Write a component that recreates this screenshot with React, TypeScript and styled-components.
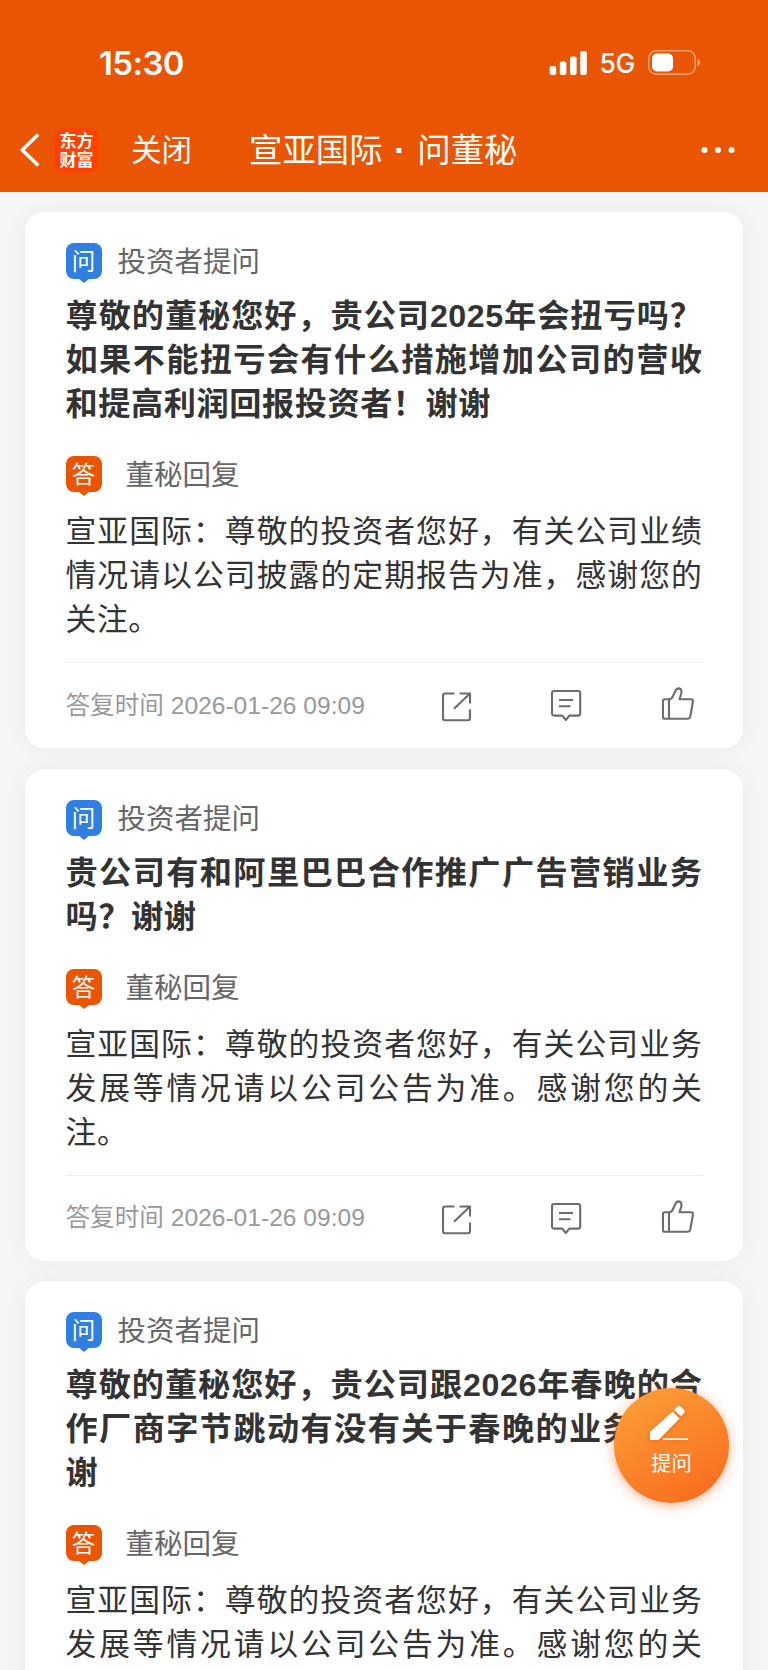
import React from 'react';
import styled, { createGlobalStyle } from 'styled-components';

const GlobalStyle = createGlobalStyle`
  * { box-sizing: border-box; }
  body {
    margin: 0;
    background: #f5f5f5;
    font-family: "Liberation Sans", "Noto Sans CJK SC", sans-serif;
    -webkit-font-smoothing: antialiased;
  }
`;

const Screen = styled.div`
  position: relative;
  width: 768px;
  height: 1670px;
  overflow: hidden;
  background: #f6f6f6;
`;

const Header = styled.header`
  position: relative;
  z-index: 1;
  height: 192px;
  background: #ea5504;
  color: #fff;
`;

const StatusBar = styled.div`
  display: flex;
  align-items: center;
  height: 108px;
  padding: 17px 67px 0 99px;
  font-family: Inter, sans-serif;
`;

const Clock = styled.div`
  flex: 1;
  font-size: 32.8px;
  font-weight: 600;
  letter-spacing: -0.5px;
`;

const Network = styled.span`
  margin: 1px 13px 0 12px;
  font-size: 26.5px;
  font-weight: 500;
  letter-spacing: -0.3px;
`;

const NavBar = styled.nav`
  display: flex;
  align-items: center;
  height: 84px;
  padding: 0 33px 0 20px;
`;

const Logo = styled.div`
  display: flex;
  flex-direction: column;
  justify-content: center;
  width: 45px;
  height: 45px;
  margin: 0 32px 0 14px;
  padding-bottom: 3px;
  border-radius: 10px;
  background: #ff4200;
  font: 700 17px/19px "Noto Sans CJK SC", sans-serif;
  text-align: center;
`;

const Close = styled.span`
  width: 118px;
  font-size: 30.5px;
  line-height: 44px;
`;

const PageTitle = styled.h1`
  flex: 1;
  margin: 0;
  padding-top: 2px;
  font-size: 33.4px;
  font-weight: 400;
  line-height: 44px;
  white-space: nowrap;
`;

const Dot = styled.span`
  margin: 0 2.5px;
  font-weight: 700;
`;

const Feed = styled.main`
  display: flex;
  flex-direction: column;
  gap: 20.5px;
  padding: 20px 25px 0;
`;

const Card = styled.article`
  flex: none;
  padding: 31px 40.5px 0 40.5px;
  border-radius: 20px;
  background: #fff;
  box-shadow: 0 0 24px rgba(0, 0, 0, 0.055);
`;

const TagRow = styled.div<{ $gap: number }>`
  display: flex;
  gap: ${(p) => p.$gap}px;
  height: 41px;
`;

const Badge = styled.span<{ $color: string }>`
  position: relative;
  width: 36px;
  height: 36px;
  border-radius: 8px;
  background: ${(p) => p.$color};
  color: #fff;
  font: 400 23.5px/34px "Noto Sans CJK SC", sans-serif;
  text-align: center;

  &::after {
    content: "";
    position: absolute;
    left: 12px;
    top: 35px;
    border: 6px solid transparent;
    border-top: 5.5px solid ${(p) => p.$color};
    border-bottom: 0;
  }
`;

const TagLabel = styled.span`
  color: #666;
  font-size: 28.5px;
  line-height: 38px;
`;

const Question = styled.h2`
  margin: 10px 0 30px;
  color: #333;
  font-size: 32.2px;
  font-weight: 700;
  line-height: 44px;
  letter-spacing: 0.55px;
  text-align: justify;
`;

const Answer = styled.p`
  margin: 13px 0 20px;
  color: #333;
  font-size: 30.8px;
  line-height: 44px;
  letter-spacing: 0.6px;
  text-align: justify;
`;

const Footer = styled.footer`
  display: grid;
  grid-template-columns: 375.5px 109px 111px 1fr;
  align-items: center;
  height: 86px;
  border-top: 1px solid #eee;
`;

const Time = styled.time`
  padding-bottom: 6px;
  color: #999;
  font-size: 24.6px;
  white-space: nowrap;
`;

const ActionIcon = styled.svg<{ $lift?: number }>`
  display: block;
  margin-bottom: ${(p) => p.$lift ?? 0}px;
  overflow: visible;
  fill: none;
  stroke: #6c6c6c;
  stroke-width: 2.1;
  stroke-linejoin: round;
`;

const AskButton = styled.button`
  position: absolute;
  z-index: 2;
  left: 614px;
  top: 1388px;
  display: flex;
  flex-direction: column;
  align-items: center;
  width: 115px;
  height: 115px;
  padding: 15px 0 0;
  border: 0;
  border-radius: 50%;
  background: linear-gradient(150deg, #fba038 5%, #f96d1e 90%);
  box-shadow: 0 2px 12px rgba(249, 96, 24, 0.5);
  color: #fff;
  font: 400 20.3px/28px "Noto Sans CJK SC", sans-serif;
`;

const PencilIcon = styled.svg`
  display: block;
  margin: 1px 5px 6px 0;
  filter: drop-shadow(0 1px 2px rgba(220, 70, 0, 0.45));
`;

const ShareIcon = () => (
  <ActionIcon width="31" height="33" viewBox="0 0 31 33">
    <path d="M13.5 4.5H4.2Q2 4.5 2 6.7V29Q2 31.2 4.2 31.2H27Q29 31.2 29 29V20.5M18.5 4.5H29V14.5M29 4.5L13 19.8" />
  </ActionIcon>
);

const CommentIcon = () => (
  <ActionIcon width="32" height="33" viewBox="0 0 32 33">
    <path d="M4.2 2H28Q30.2 2 30.2 4.2V24.5Q30.2 26.6 28 26.6H19.3L15.8 31L12.3 26.6H4.2Q2 26.6 2 24.5V4.2Q2 2 4.2 2ZM9 11H23M9 17.2H20.5" />
  </ActionIcon>
);

const LikeIcon = () => (
  <ActionIcon $lift={4} width="33" height="35" viewBox="0 0 33 35">
    <path d="M8 13.2H3.8Q2 13.2 2 15V31Q2 32.8 3.8 32.8H26.5Q28.7 32.8 29.2 30.8L32 15.5Q32 13.2 30 13.2H18.5L20.3 7.5Q21 3 18 2.4Q15.3 2.3 14.3 5.2L11.5 11Q10.5 13.2 8 13.2V32.8" />
  </ActionIcon>
);

interface Entry {
  question: string;
  answer: string;
}

const entries: Entry[] = [
  {
    question:
      '尊敬的董秘您好，贵公司2025年会扭亏吗？如果不能扭亏会有什么措施增加公司的营收和提高利润回报投资者！谢谢',
    answer:
      '宣亚国际：尊敬的投资者您好，有关公司业绩情况请以公司披露的定期报告为准，感谢您的关注。',
  },
  {
    question: '贵公司有和阿里巴巴合作推广广告营销业务吗？谢谢',
    answer:
      '宣亚国际：尊敬的投资者您好，有关公司业务发展等情况请以公司公告为准。感谢您的关注。',
  },
  {
    question: '尊敬的董秘您好，贵公司跟2026年春晚的合作厂商字节跳动有没有关于春晚的业务？谢谢',
    answer:
      '宣亚国际：尊敬的投资者您好，有关公司业务发展等情况请以公司公告为准。感谢您的关注。',
  },
];

const QACard = ({ question, answer }: Entry) => (
  <Card>
    <TagRow $gap={16}>
      <Badge $color="#2f7fe3">问</Badge>
      <TagLabel>投资者提问</TagLabel>
    </TagRow>
    <Question>{question}</Question>
    <TagRow $gap={24}>
      <Badge $color="#ea5504">答</Badge>
      <TagLabel>董秘回复</TagLabel>
    </TagRow>
    <Answer>{answer}</Answer>
    <Footer>
      <Time>答复时间 2026-01-26 09:09</Time>
      <ShareIcon />
      <CommentIcon />
      <LikeIcon />
    </Footer>
  </Card>
);

export default function App() {
  return (
    <Screen>
      <GlobalStyle />
      <Header>
        <StatusBar>
          <Clock>15:30</Clock>
          <svg width="38" height="24" viewBox="0 0 38 24" fill="#fff">
            <rect x="0.6" y="15" width="6.6" height="9" rx="2" />
            <rect x="10.8" y="10.5" width="6.6" height="13.5" rx="2" />
            <rect x="21" y="5.5" width="6.6" height="18.5" rx="2" />
            <rect x="31.2" y="0" width="6.6" height="24" rx="2" />
          </svg>
          <Network>5G</Network>
          <svg width="53" height="25" viewBox="0 0 53 25" fill="#fff">
            <rect x="0.8" y="0.8" width="46.4" height="23.4" rx="7.5" fill="none" stroke="#fff" strokeOpacity="0.45" strokeWidth="1.5" />
            <rect x="4" y="3.5" width="21" height="18" rx="5" />
            <path d="M49.5 8.8Q52 10 52 12.5T49.5 16.2Z" opacity="0.5" />
          </svg>
        </StatusBar>
        <NavBar>
          <svg width="20" height="34" viewBox="0 0 20 34" fill="none" stroke="#fff" strokeWidth="3.5">
            <path d="M18.2 1.5L2.3 17L18.2 32.5" />
          </svg>
          <Logo>
            <span>东方</span>
            <span>财富</span>
          </Logo>
          <Close>关闭</Close>
          <PageTitle>
            宣亚国际<Dot> · </Dot>问董秘
          </PageTitle>
          <svg width="34" height="8" viewBox="0 0 34 8" fill="#fff">
            <circle cx="3.5" cy="4" r="3" />
            <circle cx="17" cy="4" r="3" />
            <circle cx="30.5" cy="4" r="3" />
          </svg>
        </NavBar>
      </Header>
      <Feed>
        {entries.map((entry, i) => (
          <QACard key={i} {...entry} />
        ))}
      </Feed>
      <AskButton>
        <PencilIcon width="40" height="38" viewBox="0 0 40 38" fill="#fff">
          <path d="M1 36V28L23.5 7.5L30.5 14.5L9.5 36Z" />
          <path d="M25 6L28.5 2.5Q30 1 31.8 2.5L35 5.8Q36.5 7.5 35 9L32 12.5Z" />
          <path d="M14 34.3H39V36H14Z" />
        </PencilIcon>
        提问
      </AskButton>
    </Screen>
  );
}
